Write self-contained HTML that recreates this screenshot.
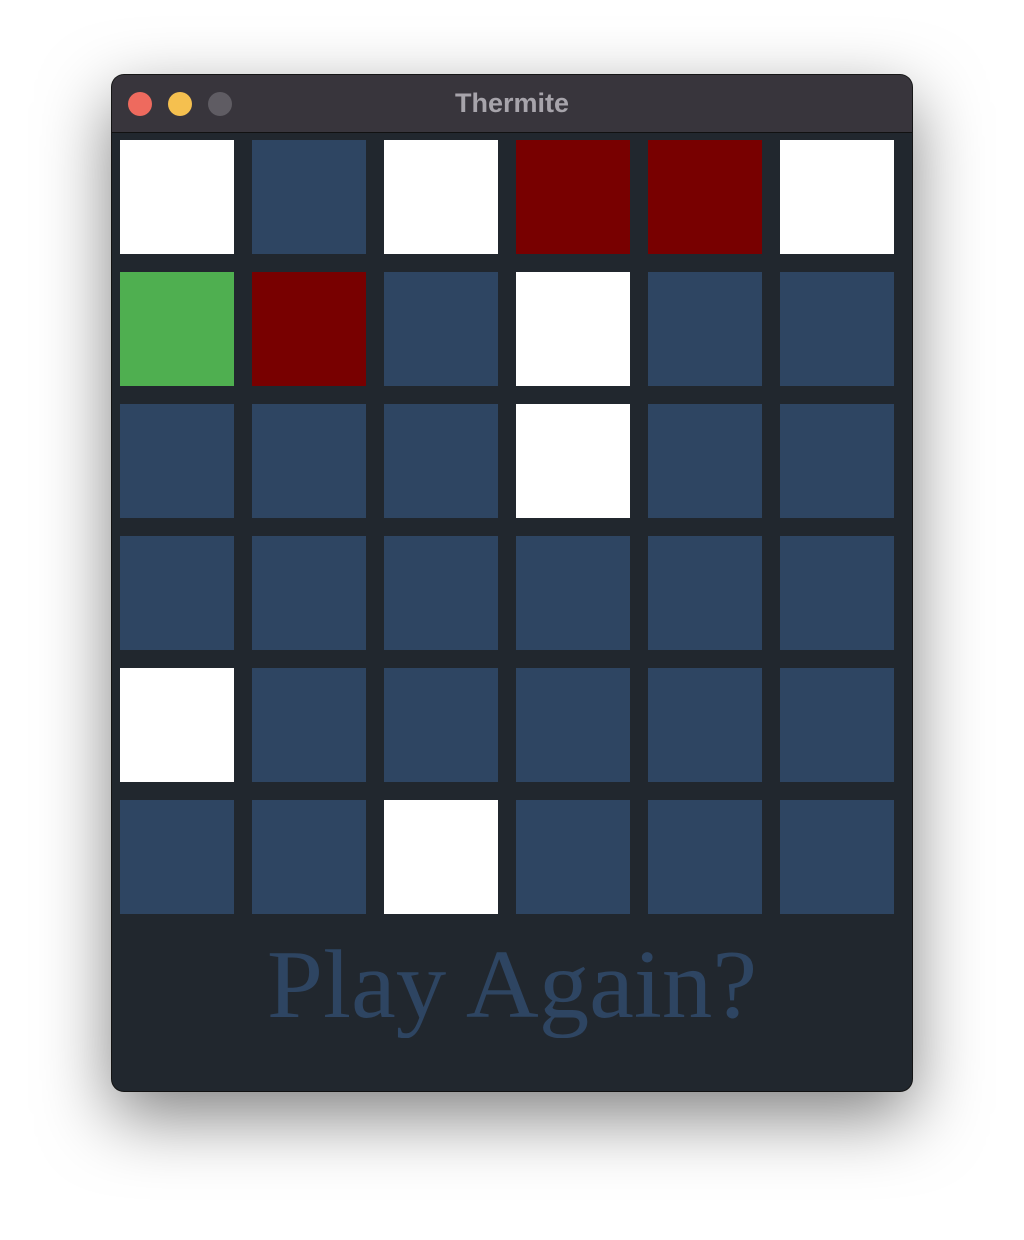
<!DOCTYPE html>
<html><head><style>
html,body{margin:0;padding:0;background:#fff;width:1024px;height:1240px;overflow:hidden}
.win{position:absolute;left:112px;top:75px;width:800px;height:1016px;border-radius:12px;background:#21272e;box-shadow:0 25px 70px rgba(0,0,0,.5),0 0 0 1px #1a1a1a;overflow:hidden}
.tb{position:absolute;left:0;top:0;width:800px;height:57px;background:#38353c;border-bottom:1px solid #111}
.dot{position:absolute;top:17px;width:24px;height:24px;border-radius:50%}
.title{position:absolute;left:0;width:800px;top:13px;text-align:center;font:bold 27px "Liberation Sans",sans-serif;color:#a7a4ab}
.c{position:absolute;width:114px;height:114px;background:#2e4562}
.w{background:#fff}.r{background:#780000}.g{background:#4faf50}
.txt{position:absolute;left:0;width:800px;top:861px;text-align:center;font:97px "Liberation Serif",serif;color:#2e4562;transform:scaleX(1.04);line-height:1}
</style></head><body>
<div class="win">
<div class="tb"><div class="dot" style="left:16px;background:#ee6a5e"></div><div class="dot" style="left:56px;background:#f5c04f"></div><div class="dot" style="left:96px;background:#5f5c63"></div><div class="title">Thermite</div></div>
<div id="g"></div>
<div class="txt">Play Again?</div>
</div>
<script>
var m=["wbwrrw","grbwbb","bbbwbb","bbbbbb","wbbbbb","bbwbbb"],h="";
for(var r=0;r<6;r++)for(var c=0;c<6;c++){var t=m[r][c];h+='<div class="c '+(t=="b"?"":t)+'" style="left:'+(8+132*c)+'px;top:'+(65+132*r)+'px"></div>';}
document.getElementById("g").innerHTML=h;
</script>
</body></html>
